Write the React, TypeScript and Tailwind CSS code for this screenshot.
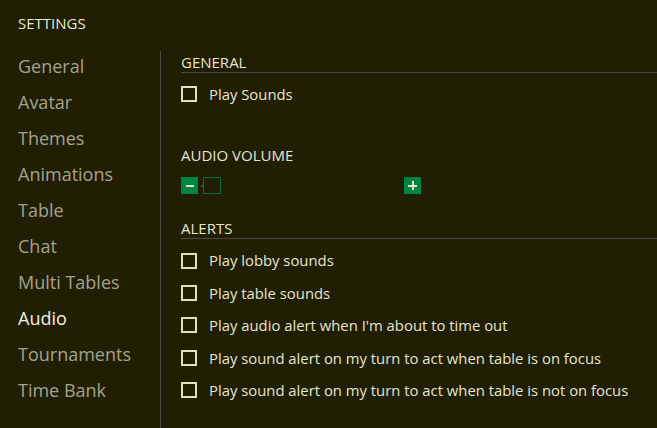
import React from 'react';

const menu = ['General', 'Avatar', 'Themes', 'Animations', 'Table', 'Chat', 'Multi Tables', 'Audio', 'Tournaments', 'Time Bank'];

const alerts = [
  'Play lobby sounds',
  'Play table sounds',
  "Play audio alert when I'm about to time out",
  'Play sound alert on my turn to act when table is on focus',
  'Play sound alert on my turn to act when table is not on focus',
];

function Check({ label }: { label: string }) {
  return (
    <label className="flex items-center h-[32.4px] gap-3">
      <span className="w-4 h-4 border-2 border-[#e4e0c4] shrink-0" />
      <span className="text-[14.85px] text-[#e6e4d2]">{label}</span>
    </label>
  );
}

function Heading({ title, line = true }: { title: string; line?: boolean }) {
  return (
    <div className={`text-[15px] leading-[20px] h-[21px] text-[#e6e4d2] ${line ? 'border-b border-[#4a4a44]' : ''}`}>
      {title}
    </div>
  );
}

export default function App() {
  return (
    <div
      className="w-[657px] h-[428px] bg-[#201e03] overflow-hidden"
      style={{ fontFamily: '"Open Sans", "Noto Sans", sans-serif' }}
    >
      <div className="pl-[18px] pt-[12px] text-[15px] text-[#e8e6d4] h-[51px]">SETTINGS</div>
      <div className="flex h-[377px]">
        <div className="w-[160px] pl-[18px] flex flex-col -mt-[3px]">
          {menu.map((m) => (
            <div
              key={m}
              className={`h-[36px] shrink-0 flex items-center text-[18px] ${m === 'Audio' ? 'text-[#f2f0e2]' : 'text-[#a4a290]'}`}
            >
              {m}
            </div>
          ))}
        </div>
        <div className="w-px bg-[#4e4d45]" />
        <div className="flex-1 pl-[20px] pt-[1px]">
          <Heading title="GENERAL" />
          <div className="mt-[5px]">
            <Check label="Play Sounds" />
          </div>
          <div className="mt-[35px]">
            <Heading title="AUDIO VOLUME" line={false} />
          </div>
          <div className="flex items-center mt-[11px] h-[17px] w-[240px]">
            <div className="w-[17px] h-[17px] bg-[#008442] flex items-center justify-center">
              <span className="w-[8px] h-[2px] bg-[#e4e0c4]" />
            </div>
            <span className="w-[2px] h-[2px] bg-[#0a6a36] ml-[3px]" />
            <div className="w-[18px] h-[17px] border border-[#0a6a36]" />
            <div className="flex-1" />
            <div className="w-[17px] h-[17px] bg-[#008442] relative">
              <span className="absolute left-[4px] top-[7.5px] w-[9px] h-[2px] bg-[#e4e0c4]" />
              <span className="absolute left-[7.5px] top-[4px] w-[2px] h-[9px] bg-[#e4e0c4]" />
            </div>
          </div>
          <div className="mt-[24px]">
            <Heading title="ALERTS" />
          </div>
          <div className="mt-[5px]">
            {alerts.map((a) => (
              <Check key={a} label={a} />
            ))}
          </div>
        </div>
      </div>
    </div>
  );
}
